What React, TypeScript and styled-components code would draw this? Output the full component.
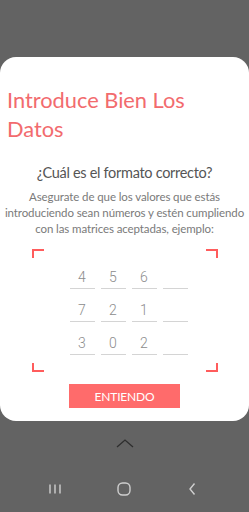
import React from 'react'
import styled, { createGlobalStyle } from 'styled-components'

const GlobalStyle = createGlobalStyle`
  html, body {
    margin: 0;
    padding: 0;
    background: #636363;
  }
  * {
    box-sizing: border-box;
  }
`

const Screen = styled.div`
  width: 249px;
  height: 512px;
  background: #636363;
  display: flex;
  flex-direction: column;
  overflow: hidden;
  font-family: Lato, "Open Sans", sans-serif;
`

const Card = styled.div`
  margin-top: 57px;
  height: 364px;
  background: #fff;
  border-radius: 16px;
  display: flex;
  flex-direction: column;
  overflow: hidden;
`

const Title = styled.h1`
  margin: 28px 0 0 7px;
  max-width: 200px;
  font-size: 21.8px;
  line-height: 29px;
  font-weight: 400;
  color: #f26b6e;
`

const Question = styled.h2`
  margin: 20px 0 0;
  font-size: 14.5px;
  line-height: 20px;
  font-weight: 400;
  letter-spacing: -0.3px;
  color: #555;
  text-align: center;
`

const Explain = styled.p`
  margin: 6px -20px 0;
  font-size: 11.5px;
  line-height: 16px;
  letter-spacing: -0.1px;
  color: #7a7a7a;
  text-align: center;
  white-space: nowrap;
`

const Frame = styled.div`
  position: relative;
  margin: 12px auto 0;
  width: 186px;
  height: 123px;
  display: flex;
  justify-content: center;
  align-items: center;
`

const Corner = styled.span<{ $v: 'top' | 'bottom'; $h: 'left' | 'right' }>`
  position: absolute;
  width: 12px;
  height: 9px;
  ${p => p.$v}: 0;
  ${p => p.$h}: 0;
  border-${p => p.$v}: 2px solid #ff5c5c;
  border-${p => p.$h}: 2px solid #ff5c5c;
`

const Grid = styled.div`
  display: grid;
  grid-template-columns: repeat(4, 25px);
  column-gap: 6px;
  row-gap: 12px;
  margin: 2px 0 0 8px;
`

const Cell = styled.div`
  height: 21px;
  border-bottom: 1px solid #d4d4d4;
  font-family: Roboto, sans-serif;
  font-weight: 300;
  font-size: 14px;
  line-height: 18px;
  color: #8c8c8c;
  text-align: center;
`

const Button = styled.button`
  margin: 12px auto 0;
  width: 111px;
  height: 24px;
  border: none;
  background: #ff6b6b;
  color: #fff;
  font-family: Lato, sans-serif;
  font-size: 12px;
  letter-spacing: -0.2px;
  padding: 0;
`

const Handle = styled.div`
  height: 44px;
  display: flex;
  justify-content: center;
  align-items: center;
`

const NavBar = styled.div`
  margin-top: auto;
  height: 47px;
  display: flex;
  justify-content: space-between;
  align-items: center;
  padding: 0 49px 0 47px;
`

const NavIcon = styled.svg`
  width: 16px;
  height: 16px;
`

const rows = [
  ['4', '5', '6', ''],
  ['7', '2', '1', ''],
  ['3', '0', '2', ''],
]

export default function App() {
  return (
    <>
      <GlobalStyle />
      <Screen>
        <Card>
          <Title>Introduce Bien Los Datos</Title>
          <Question>¿Cuál es el formato correcto?</Question>
          <Explain>
            Asegurate de que los valores que estás
            <br />
            introduciendo sean números y estén cumpliendo
            <br />
            con las matrices aceptadas, ejemplo:
          </Explain>
          <Frame>
            <Corner $v="top" $h="left" />
            <Corner $v="top" $h="right" />
            <Corner $v="bottom" $h="left" />
            <Corner $v="bottom" $h="right" />
            <Grid>
              {rows.flat().map((n, i) => (
                <Cell key={i}>{n}</Cell>
              ))}
            </Grid>
          </Frame>
          <Button>ENTIENDO</Button>
        </Card>
        <Handle>
          <svg width="18" height="10" viewBox="0 0 18 10">
            <path d="M1 9 L9 2 L17 9" fill="none" stroke="#2e2e2e" strokeWidth="1.3" />
          </svg>
        </Handle>
        <NavBar>
          <NavIcon viewBox="0 0 16 16">
            <path d="M3 3.5 V12.5 M8 3.5 V12.5 M13 3.5 V12.5" stroke="#cfcfcf" strokeWidth="1.4" />
          </NavIcon>
          <NavIcon viewBox="0 0 16 16">
            <rect x="2" y="2" width="12" height="12" rx="4.5" fill="none" stroke="#cfcfcf" strokeWidth="1.4" />
          </NavIcon>
          <NavIcon viewBox="0 0 16 16">
            <path d="M10.5 2.5 L6 8 L10.5 13.5" fill="none" stroke="#cfcfcf" strokeWidth="1.4" />
          </NavIcon>
        </NavBar>
      </Screen>
    </>
  )
}
